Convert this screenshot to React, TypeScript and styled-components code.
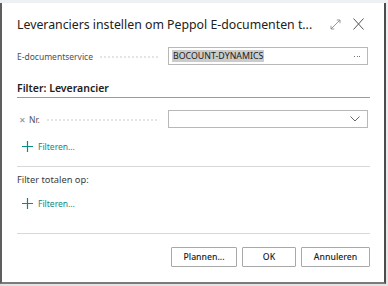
import React from 'react';
import styled, { createGlobalStyle } from 'styled-components';

const GlobalStyle = createGlobalStyle`
  html, body {
    margin: 0;
    padding: 0;
    background: #dcdcdc;
  }
  * {
    box-sizing: border-box;
  }
`;

const colors = {
  text: '#212121',
  label: '#505050',
  border: '#b8b8b8',
  line: '#d8d8d8',
  teal: '#0a8a84',
};

const Screen = styled.div`
  width: 388px;
  height: 286px;
  padding: 3px 2px 2px 0;
  background: linear-gradient(#eef1f4, #e4e4e4);
  display: flex;
  font-family: 'Noto Sans', 'Open Sans', sans-serif;
`;

const Dialog = styled.div`
  flex: 1;
  min-width: 0;
  display: flex;
  flex-direction: column;
  background: #fff;
  border-left: 2px solid #5e5e5e;
  border-right: 2px solid #4c4c4c;
  border-bottom: 2px solid #7c7c7c;
  padding: 0 14px 0 15px;
`;

const TitleBar = styled.div`
  display: flex;
  align-items: center;
  height: 42px;
  padding-right: 6px;
`;

const Title = styled.h1`
  flex: 1;
  min-width: 0;
  margin: 0;
  font-size: 12.3px;
  font-weight: 400;
  color: ${colors.text};
  white-space: nowrap;
  overflow: hidden;
`;

const IconButton = styled.span<{ gap?: number }>`
  display: flex;
  align-items: center;
  justify-content: center;
  margin-left: ${(p) => p.gap ?? 0}px;
`;

const Row = styled.div<{ top: number; h: number }>`
  display: grid;
  grid-template-columns: 151px 200px;
  align-items: center;
  height: ${(p) => p.h}px;
  margin-top: ${(p) => p.top}px;
`;

const Label = styled.div`
  display: flex;
  align-items: center;
  font-size: 8.5px;
  color: ${colors.label};
  padding-right: 10px;
  white-space: nowrap;
  &::after {
    content: '';
    flex: 1;
    height: 2px;
    margin-left: 6px;
    margin-top: 2px;
    background-image: radial-gradient(circle, #c4c4c4 0.6px, transparent 0.8px);
    background-size: 4px 2px;
  }
`;

const Input = styled.div`
  display: flex;
  align-items: center;
  height: 100%;
  border: 1px solid ${colors.border};
  padding: 0 7px 0 3px;
  font-size: 8.8px;
  color: #1a1a1a;
`;

const Selected = styled.span`
  background: #cbcbcb;
  padding: 0 1px;
  line-height: 12px;
`;

const Spacer = styled.span`
  flex: 1;
`;

const Dots = styled.span`
  display: flex;
  gap: 1.5px;
  & > i {
    width: 1px;
    height: 1px;
    background: #777;
  }
`;

const SectionHeader = styled.div`
  margin-top: 16px;
  font-size: 10.5px;
  line-height: 14px;
  font-weight: 600;
  color: ${colors.text};
  padding-bottom: 2px;
  border-bottom: 1px solid #9a9a9a;
`;

const Remove = styled.span`
  font-size: 8px;
  color: #8a8a8a;
  margin: 0 3px 0 2px;
`;

const AddLink = styled.div<{ top: number }>`
  display: flex;
  align-items: center;
  gap: 5px;
  height: 14px;
  margin-top: ${(p) => p.top}px;
  margin-left: 5px;
  font-size: 8.5px;
  color: ${colors.teal};
`;

const Divider = styled.div<{ top: number }>`
  margin-top: ${(p) => p.top}px;
  height: 1px;
  background: ${colors.line};
`;

const Caption = styled.div`
  margin-top: 6px;
  font-size: 9.3px;
  line-height: 14px;
  color: #3a3a3a;
`;

const Footer = styled.div`
  display: flex;
  justify-content: flex-end;
  gap: 5px;
  margin-top: 13px;
`;

const Button = styled.button<{ w: number }>`
  width: ${(p) => p.w}px;
  height: 20px;
  background: #fff;
  border: 1px solid #a8a8a8;
  border-radius: 1px;
  font-family: inherit;
  font-size: 8.7px;
  font-weight: 500;
  color: ${colors.text};
  padding: 0;
`;

const Plus = () => (
  <svg width="11" height="11" viewBox="0 0 11 11">
    <path d="M5.5 0v11M0 5.5h11" stroke={colors.teal} strokeWidth="1.2" />
  </svg>
);

const App: React.FC = () => (
  <>
    <GlobalStyle />
    <Screen>
      <Dialog>
        <TitleBar>
          <Title>Leveranciers instellen om Peppol E-documenten t...</Title>
          <IconButton>
            <svg width="11" height="11" viewBox="0 0 11 11">
              <path
                d="M1 10L10 1M6.8 1H10v3.2M1 6.8V10h3.2"
                stroke="#8c8c8c"
                fill="none"
                strokeWidth="0.9"
              />
            </svg>
          </IconButton>
          <IconButton gap={12}>
            <svg width="11" height="12" viewBox="0 0 11 12">
              <path d="M0.5 0.5l10 11M10.5 0.5l-10 11" stroke="#555" strokeWidth="1" />
            </svg>
          </IconButton>
        </TitleBar>

        <Row top={2} h={18}>
          <Label>E-documentservice</Label>
          <Input>
            <Selected>BOCOUNT-DYNAMICS</Selected>
            <Spacer />
            <Dots>
              <i />
              <i />
              <i />
            </Dots>
          </Input>
        </Row>

        <SectionHeader>Filter: Leverancier</SectionHeader>

        <Row top={12} h={18}>
          <Label>
            <Remove>✕</Remove>Nr.
          </Label>
          <Input>
            <Spacer />
            <svg width="10" height="6" viewBox="0 0 10 6">
              <path d="M0.5 0.5L5 5l4.5-4.5" stroke="#666" fill="none" strokeWidth="1" />
            </svg>
          </Input>
        </Row>

        <AddLink top={11}>
          <Plus />
          Filteren...
        </AddLink>

        <Divider top={13} />

        <Caption>Filter totalen op:</Caption>

        <AddLink top={9}>
          <Plus />
          Filteren...
        </AddLink>

        <Divider top={23} />

        <Footer>
          <Button w={66}>Plannen...</Button>
          <Button w={54}>OK</Button>
          <Button w={69}>Annuleren</Button>
        </Footer>
      </Dialog>
    </Screen>
  </>
);

export default App;
